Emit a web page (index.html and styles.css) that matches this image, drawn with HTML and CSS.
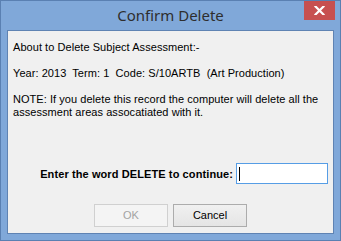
FILE: index.html
```html
<!DOCTYPE html>
<html>
<head>
<meta charset="utf-8">
<link rel="stylesheet" href="styles.css">
</head>
<body>
<div class="window">
  <div class="titlebar">
    <div class="title">Confirm Delete</div>
    <div class="close">
      <svg width="11" height="9" viewBox="0 0 11 9"><path d="M1.5 0.5 L9.5 8.5 M9.5 0.5 L1.5 8.5" stroke="#fff" stroke-width="2.2" stroke-linecap="square"/></svg>
    </div>
  </div>
  <div class="client">
    <p class="line">About to Delete Subject Assessment:-</p>
    <p class="line">Year: 2013&nbsp; Term: 1&nbsp; Code: S/10ARTB&nbsp; (Art Production)</p>
    <p class="line">NOTE: If you delete this record the computer will delete all the assessment areas assocatiated with it.</p>
    <div class="confirm-row">
      <span class="label">Enter the word DELETE to continue:</span>
      <div class="textbox"><span class="caret"></span></div>
    </div>
    <div class="buttons">
      <div class="btn disabled">OK</div>
      <div class="btn">Cancel</div>
    </div>
  </div>
</div>
</body>
</html>
```
FILE: styles.css
```css
* { box-sizing: border-box; }
html, body { margin: 0; padding: 0; background: #7fa7d8; }
.window {
  width: 341px;
  height: 241px;
  border: 1px solid #5a80b2;
  background: #80a8d9;
  display: flex;
  flex-direction: column;
  padding: 0 6px 6px 6px;
}
.titlebar {
  height: 29px;
  display: grid;
  grid-template-columns: 1fr auto 1fr;
  align-items: start;
  margin: 0 -6px;
}
.title {
  grid-column: 2;
  font-family: "Noto Sans", sans-serif;
  font-size: 15px;
  color: #2e2e2e;
  line-height: 17px;
  padding-top: 6px;
}
.close {
  grid-column: 3;
  justify-self: end;
  margin-right: 5px;
  width: 31px;
  height: 19px;
  background: #c75050;
  display: flex;
  align-items: center;
  justify-content: center;
}
.close svg { display: block; }
.client {
  flex: 1;
  background: #f0f0f0;
  border: 1px solid #5f83b3;
  padding: 10px 5px 0 5px;
  font-family: "Liberation Sans", Arial, sans-serif;
  font-size: 11px;
  line-height: 13px;
  color: #000;
}
.line { margin: 0 0 13px 0; letter-spacing: 0.05px; }
.confirm-row {
  display: flex;
  justify-content: flex-end;
  align-items: center;
  gap: 3px;
  margin-top: 44px;
}
.label { font-weight: bold; padding-top: 1px; letter-spacing: 0.1px; }
.textbox {
  width: 92px;
  height: 21px;
  background: #fff;
  border: 1px solid #569de5;
  padding: 3px 2px;
}
.caret {
  display: block;
  width: 1px;
  height: 14px;
  background: #000;
}
.buttons {
  display: flex;
  justify-content: center;
  gap: 5px;
  margin-top: 20px;
}
.btn {
  width: 74px;
  height: 23px;
  border: 1px solid #acacac;
  background: linear-gradient(#f0f0f0, #e5e5e5);
  display: flex;
  align-items: center;
  justify-content: center;
  font-size: 11px;
}
.btn.disabled {
  border-color: #d0d0d0;
  background: #f4f4f4;
  color: #a3a3a3;
}
```
